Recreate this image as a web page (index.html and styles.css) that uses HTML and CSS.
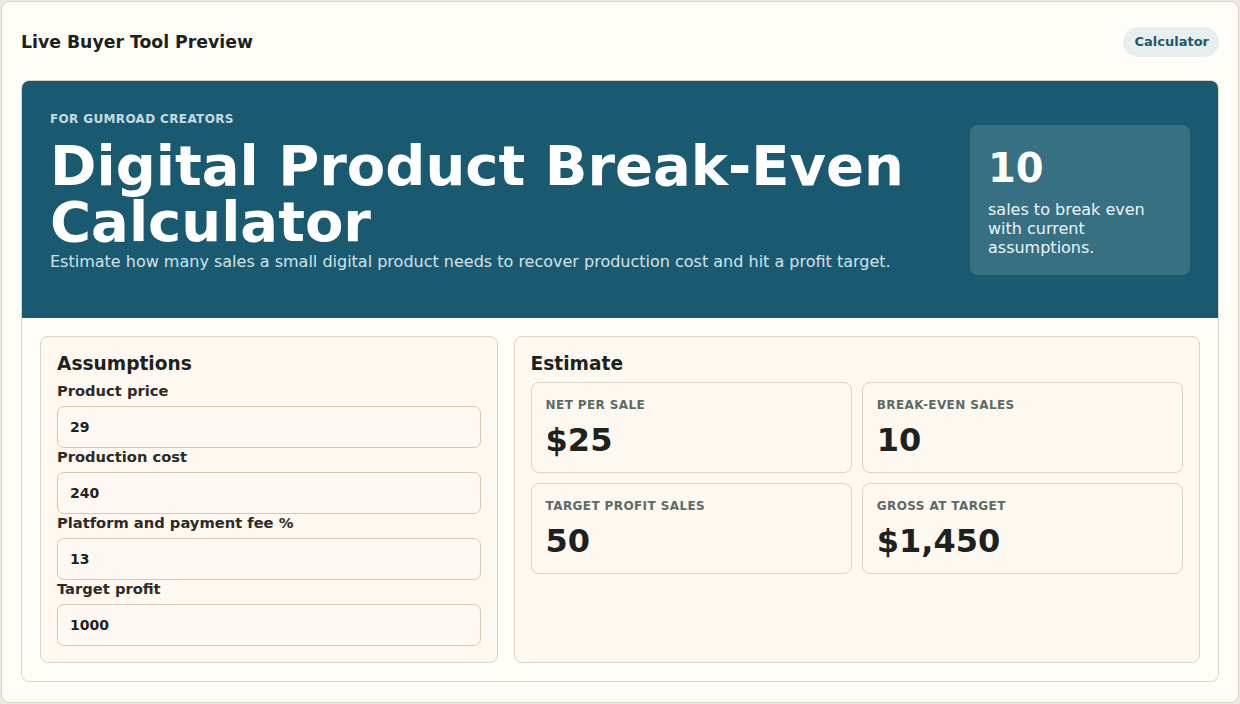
FILE: index.html
```html
<!DOCTYPE html>
<html lang="en">
<head>
    <meta charset="UTF-8">
    <meta name="viewport" content="width=device-width, initial-scale=1.0">
    <title>Live Buyer Tool Preview</title>
    <link rel="stylesheet" href="styles.css">
</head>

<body>
    <div class="preview">
        <header class="preview-header">
            <h2>Live Buyer Tool Preview</h2>
            <span class="badge">Calculator</span>
        </header>

        <div class="tool">
            <!-- Hero -->
            <section class="hero">
                <div class="hero-text">
                    <p class="eyebrow">FOR GUMROAD CREATORS</p>
                    <h1>Digital Product Break-Even Calculator</h1>
                    <p class="lead">Estimate how many sales a small digital product needs to recover production cost and hit a profit target.</p>
                </div>
                <div class="hero-stat">
                    <strong id="heroSales">10</strong>
                    <span>sales to break even with current assumptions.</span>
                </div>
            </section>

            <div class="tool-body">
                <div class="panel">
                    <h3>Assumptions</h3>
                    <label class="field">
                        <span>Product price</span>
                        <input type="number" id="price" value="29">
                    </label>
                    <label class="field">
                        <span>Production cost</span>
                        <input type="number" id="cost" value="240">
                    </label>
                    <label class="field">
                        <span>Platform and payment fee %</span>
                        <input type="number" id="fee" value="13">
                    </label>
                    <label class="field">
                        <span>Target profit</span>
                        <input type="number" id="target" value="1000">
                    </label>
                </div>

                <div class="panel">
                    <h3>Estimate</h3>
                    <div class="metrics">
                        <div class="metric">
                            <span class="metric-label">NET PER SALE</span>
                            <strong id="net">$25</strong>
                        </div>
                        <div class="metric">
                            <span class="metric-label">BREAK-EVEN SALES</span>
                            <strong id="breakEven">10</strong>
                        </div>
                        <div class="metric">
                            <span class="metric-label">TARGET PROFIT SALES</span>
                            <strong id="targetSales">50</strong>
                        </div>
                        <div class="metric">
                            <span class="metric-label">GROSS AT TARGET</span>
                            <strong id="gross">$1,450</strong>
                        </div>
                    </div>
                </div>
            </div>
        </div>
    </div>

    <script>
        const inputs = ['price', 'cost', 'fee', 'target'].map(id => document.getElementById(id));

        function money(n) {
            return '$' + Math.round(n).toLocaleString('en-US');
        }

        function update() {
            const [price, cost, fee, target] = inputs.map(i => parseFloat(i.value) || 0);
            const net = price * (1 - fee / 100);
            const breakEven = net > 0 ? Math.ceil(cost / net) : 0;
            const targetSales = net > 0 ? Math.ceil((cost + target) / net) : 0;

            document.getElementById('net').textContent = money(net);
            document.getElementById('breakEven').textContent = breakEven;
            document.getElementById('heroSales').textContent = breakEven;
            document.getElementById('targetSales').textContent = targetSales;
            document.getElementById('gross').textContent = money(targetSales * price);
        }

        inputs.forEach(i => i.addEventListener('input', update));
        update();
    </script>
</body>
</html>
```

FILE: styles.css
```css
* {
    box-sizing: border-box;
}

body, html {
    margin: 0;
    padding: 0;
    font-family: "DejaVu Sans", Verdana, sans-serif;
    background-color: #efe9de;
    color: #1d2220;
}

.preview {
    margin: 1px;
    min-height: calc(100vh - 2px);
    padding: 20px 19px;
    background-color: #fffdf8;
    border: 1px solid #ddd3c4;
    border-radius: 8px;
}

.preview-header {
    display: flex;
    justify-content: space-between;
    align-items: center;
    height: 40px;
    margin-bottom: 18px;
}

.preview-header h2 {
    margin: 0;
    font-size: 17.3px;
    font-weight: bold;
    color: #1d2220;
}

.badge {
    background-color: #e7f0ef;
    color: #1b5a70;
    font-size: 13px;
    font-weight: bold;
    line-height: 16px;
    padding: 7px 10px 7px 11px;
    border-radius: 999px;
}

.tool {
    border: 1px solid #ddd3c4;
    border-radius: 8px;
    overflow: hidden;
    background-color: #fffdf8;
}

.hero {
    display: flex;
    align-items: center;
    gap: 28px;
    padding: 28px;
    background-color: #1a5a71;
    color: #ffffff;
}

.hero-text {
    flex: 1;
    padding: 3px 0 19px 0;
}

.eyebrow {
    margin: 0 0 12px 0;
    font-size: 12px;
    font-weight: bold;
    letter-spacing: 0.35px;
    color: #c5dae0;
}

.hero h1 {
    margin: 0;
    font-size: 56px;
    line-height: 1;
    color: #ffffff;
}

.lead {
    margin: 2px 0 0 0;
    font-size: 16px;
    color: #d3e3e8;
}

.hero-stat {
    width: 220px;
    padding: 18px;
    border-radius: 8px;
    background-color: rgba(255, 255, 255, 0.13);
}

.hero-stat strong {
    display: block;
    font-size: 40px;
    line-height: 48px;
    margin-top: 1px;
    margin-bottom: 8px;
}

.hero-stat span {
    display: block;
    font-size: 16px;
    color: #eef5f7;
}

.tool-body {
    display: grid;
    grid-template-columns: 2fr 3fr;
    gap: 16px;
    padding: 18px;
}

.panel {
    background-color: #fdf8f0;
    border: 1px solid #ddd3c4;
    border-radius: 8px;
    padding: 16px;
}

.panel h3 {
    margin: 0 0 8px 0;
    font-size: 18.6px;
    color: #1d2220;
}

.field {
    display: block;
}

.field span {
    display: block;
    font-size: 14.7px;
    font-weight: bold;
    color: #2e2b27;
    margin-bottom: 7px;
}

.field input {
    display: block;
    width: 100%;
    height: 42px;
    padding: 0 12px;
    font-family: inherit;
    font-size: 14px;
    font-weight: bold;
    color: #1d2220;
    background-color: #fdf9f2;
    border: 1px solid #d6c8b3;
    border-radius: 7px;
    outline: none;
    -moz-appearance: textfield;
}

.field input::-webkit-outer-spin-button,
.field input::-webkit-inner-spin-button {
    -webkit-appearance: none;
    margin: 0;
}

.metrics {
    display: grid;
    grid-template-columns: 1fr 1fr;
    gap: 10px;
}

.metric {
    border: 1px solid #ddd3c4;
    border-radius: 8px;
    padding: 15px 14px 13px 14px;
}

.metric-label {
    display: block;
    font-size: 12px;
    font-weight: bold;
    letter-spacing: 0.4px;
    color: #5d6b68;
    margin-bottom: 9px;
}

.metric strong {
    display: block;
    font-size: 32px;
    color: #1d2220;
}
```
